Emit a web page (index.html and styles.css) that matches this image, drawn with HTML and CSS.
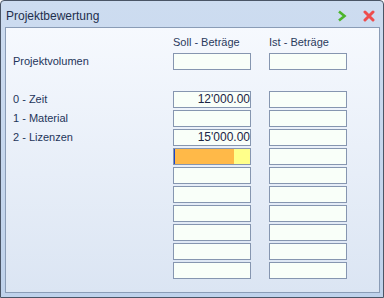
FILE: index.html
```html
<!DOCTYPE html>
<html>
<head>
<title>Projektbewertung</title>
<link rel="stylesheet" href="styles.css">
</head>
<body>

<div class="window">
  <div class="titlebar">
    <span class="title">Projektbewertung</span>
    <span class="buttons">
      <svg class="btn" width="12" height="12" viewBox="0 0 12 12">
        <path d="M3 1.5 L8.5 6 L3 10.5" fill="none" stroke="#4cb52c" stroke-width="2.6" stroke-linejoin="miter"/>
      </svg>
      <svg class="btn" width="12" height="12" viewBox="0 0 12 12">
        <path d="M2 2 L10 10 M10 2 L2 10" stroke="#ee4d4d" stroke-width="3" stroke-linecap="round"/>
      </svg>
    </span>
  </div>

  <div class="panel">
    <div class="grid">
      <div></div>
      <div class="head">Soll - Beträge</div>
      <div class="head">Ist - Beträge</div>

      <div class="label">Projektvolumen</div>
      <div class="field"></div>
      <div class="field"></div>

      <div></div><div></div><div></div>

      <div class="label">0 - Zeit</div>
      <div class="field">12'000.00</div>
      <div class="field"></div>

      <div class="label">1 - Material</div>
      <div class="field"></div>
      <div class="field"></div>

      <div class="label">2 - Lizenzen</div>
      <div class="field">15'000.00</div>
      <div class="field"></div>

      <div></div>
      <div class="field active"><span class="caret"></span><span class="fill" style="width: 77%"></span></div>
      <div class="field"></div>

      <div></div><div class="field"></div><div class="field"></div>
      <div></div><div class="field"></div><div class="field"></div>
      <div></div><div class="field"></div><div class="field"></div>
      <div></div><div class="field"></div><div class="field"></div>
      <div></div><div class="field"></div><div class="field"></div>
      <div></div><div class="field"></div><div class="field"></div>
    </div>
  </div>
</div>

</body>
</html>
```

FILE: styles.css
```css
body {
  margin: 0;
  font-family: "Liberation Sans", Arial, sans-serif;
  background: #ffffff;
}
.window {
  width: 384px;
  height: 298px;
  box-sizing: border-box;
  border: 1px solid #4a5566;
  border-radius: 4px 4px 0 0;
  background: linear-gradient(#cddcf0, #bfd2eb);
  padding: 0 3px 4px 4px;
  display: flex;
  flex-direction: column;
}
.titlebar {
  height: 26px;
  display: flex;
  align-items: center;
  justify-content: space-between;
  padding: 0 0 0 1px;
}
.title {
  font-size: 12px;
  color: #1e2f4d;
  padding-top: 4px;
}
.buttons {
  display: flex;
  gap: 15px;
  padding: 3px 5px 0 0;
}
.btn {
  display: block;
}
.panel {
  flex: 1;
  border: 1px solid #8a9cb6;
  background: linear-gradient(#f6f9fe, #dbe5f3);
  padding: 6px 0 0 7px;
}
.grid {
  display: grid;
  grid-template-columns: 142px 78px 78px;
  grid-auto-rows: 17px;
  column-gap: 18px;
  row-gap: 2px;
}
.head {
  font-size: 11px;
  color: #2a3a5c;
  line-height: 13px;
  padding-top: 2px;
}
.label {
  font-size: 11px;
  color: #1e355a;
  line-height: 17px;
}
.field {
  box-sizing: border-box;
  border: 1px solid #8696b0;
  background: #f9fff9;
  font-size: 12px;
  line-height: 15px;
  color: #1b2444;
  text-align: right;
  white-space: nowrap;
  overflow: hidden;
}
.field.active {
  background: #ffff8a;
  display: flex;
  text-align: left;
}
.caret {
  width: 1px;
  background: #1b45c8;
}
.fill {
  background: #ffb948;
}
```
